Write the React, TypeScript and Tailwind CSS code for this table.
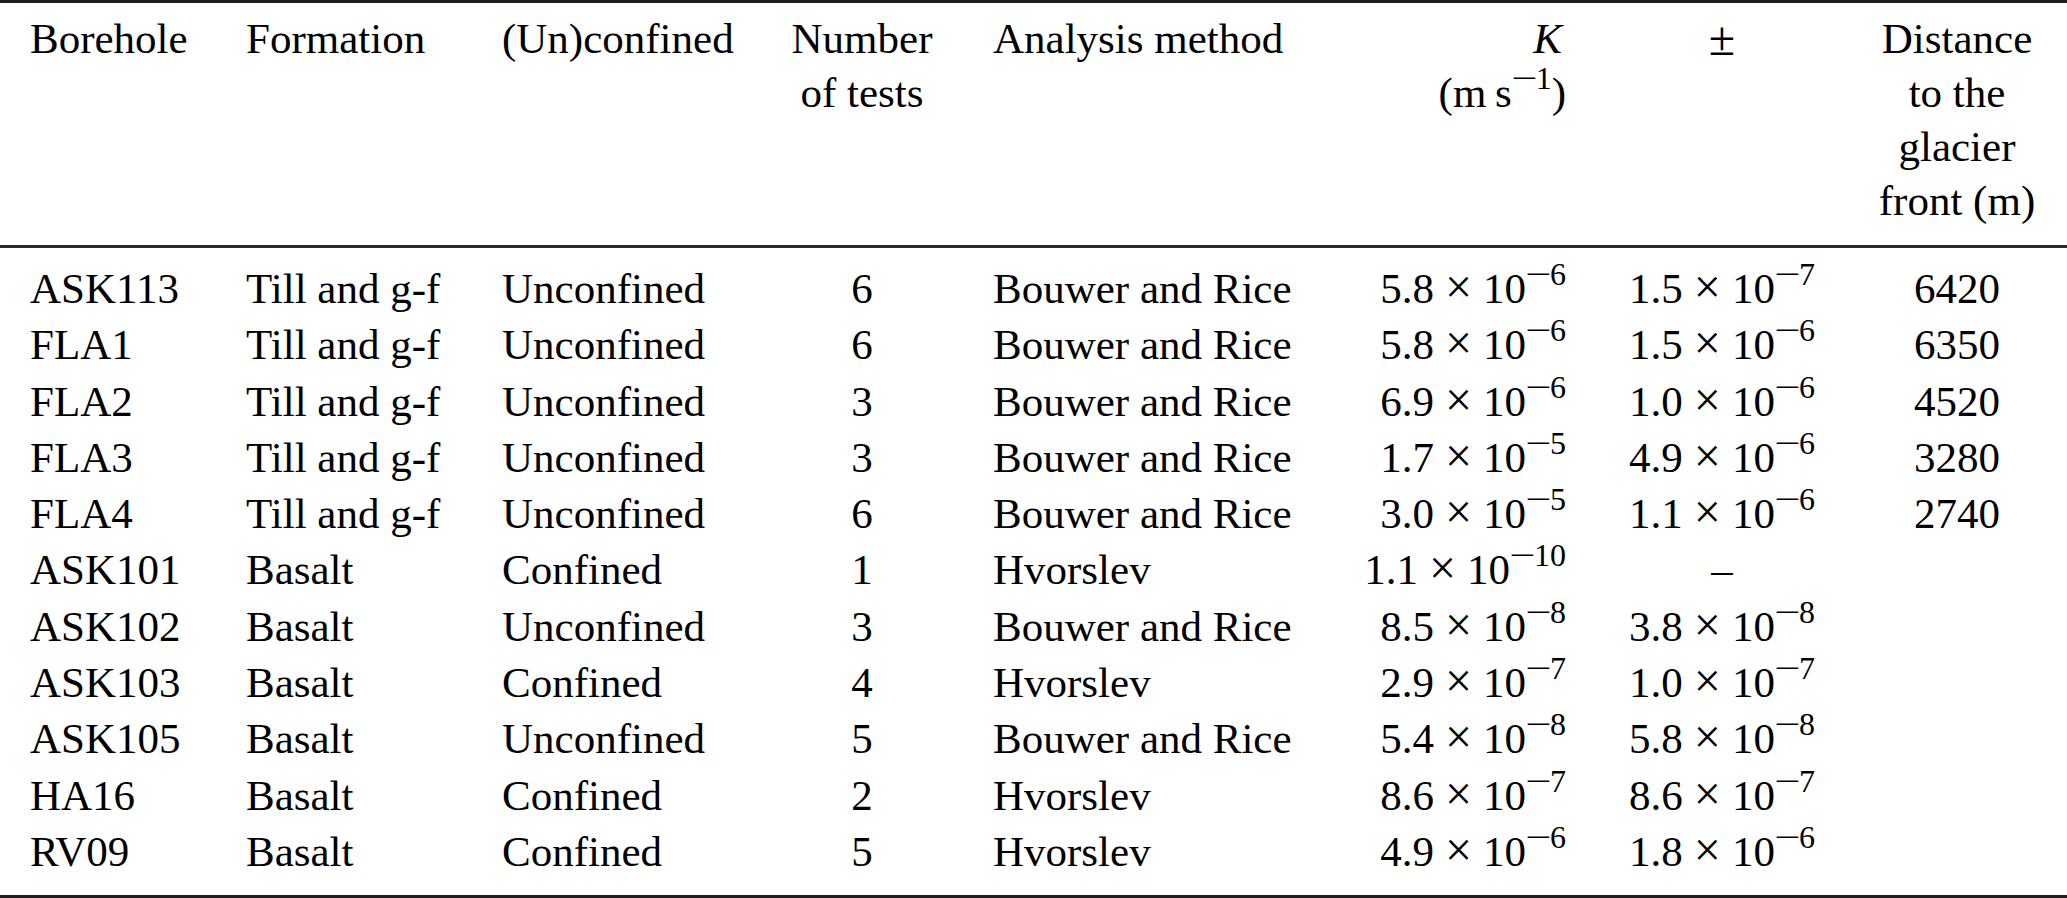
import React from 'react';

type Sci = { m: string; e: string } | null;

interface Row {
	borehole: string;
	formation: string;
	confined: string;
	tests: string;
	method: string;
	k: Sci;
	err: Sci;
	distance: string;
}

const ROWS: Row[] = [
	{ borehole: 'ASK113', formation: 'Till and g-f', confined: 'Unconfined', tests: '6', method: 'Bouwer and Rice', k: { m: '5.8', e: '6' }, err: { m: '1.5', e: '7' }, distance: '6420' },
	{ borehole: 'FLA1', formation: 'Till and g-f', confined: 'Unconfined', tests: '6', method: 'Bouwer and Rice', k: { m: '5.8', e: '6' }, err: { m: '1.5', e: '6' }, distance: '6350' },
	{ borehole: 'FLA2', formation: 'Till and g-f', confined: 'Unconfined', tests: '3', method: 'Bouwer and Rice', k: { m: '6.9', e: '6' }, err: { m: '1.0', e: '6' }, distance: '4520' },
	{ borehole: 'FLA3', formation: 'Till and g-f', confined: 'Unconfined', tests: '3', method: 'Bouwer and Rice', k: { m: '1.7', e: '5' }, err: { m: '4.9', e: '6' }, distance: '3280' },
	{ borehole: 'FLA4', formation: 'Till and g-f', confined: 'Unconfined', tests: '6', method: 'Bouwer and Rice', k: { m: '3.0', e: '5' }, err: { m: '1.1', e: '6' }, distance: '2740' },
	{ borehole: 'ASK101', formation: 'Basalt', confined: 'Confined', tests: '1', method: 'Hvorslev', k: { m: '1.1', e: '10' }, err: null, distance: '' },
	{ borehole: 'ASK102', formation: 'Basalt', confined: 'Unconfined', tests: '3', method: 'Bouwer and Rice', k: { m: '8.5', e: '8' }, err: { m: '3.8', e: '8' }, distance: '' },
	{ borehole: 'ASK103', formation: 'Basalt', confined: 'Confined', tests: '4', method: 'Hvorslev', k: { m: '2.9', e: '7' }, err: { m: '1.0', e: '7' }, distance: '' },
	{ borehole: 'ASK105', formation: 'Basalt', confined: 'Unconfined', tests: '5', method: 'Bouwer and Rice', k: { m: '5.4', e: '8' }, err: { m: '5.8', e: '8' }, distance: '' },
	{ borehole: 'HA16', formation: 'Basalt', confined: 'Confined', tests: '2', method: 'Hvorslev', k: { m: '8.6', e: '7' }, err: { m: '8.6', e: '7' }, distance: '' },
	{ borehole: 'RV09', formation: 'Basalt', confined: 'Confined', tests: '5', method: 'Hvorslev', k: { m: '4.9', e: '6' }, err: { m: '1.8', e: '6' }, distance: '' },
];

// superscript exponent with a wide TeX-like minus sign
const Exponent: React.FC<{ value: string }> = ({ value }) => (
	<sup className="text-[32px] -top-[18px]">
		<span className="inline-block w-[24px] text-center scale-x-[1.45]">−</span>
		{value}
	</sup>
);

const SciValue: React.FC<{ value: Sci }> = ({ value }) => {
	if (!value) return <span>–</span>;
	return (
		<span className="whitespace-nowrap">
			{value.m}
			<span className="mx-[11px] text-[48px] leading-none">×</span>
			10
			<Exponent value={value.e} />
		</span>
	);
};

export default function App() {
	return (
		<div className="w-[2067px] h-[898px] bg-white text-black font-['Liberation_Serif',serif] text-[43px]">
			{/* top rule */}
			<div className="h-[3px] bg-[#1e1e1e]" />

			{/* Header */}
			<div className="flex items-start pl-[30px] pt-[9px] leading-[54px] h-[242px]">
				<div className="w-[216px]">Borehole</div>
				<div className="w-[256px]">Formation</div>
				<div className="w-[278px]">(Un)confined</div>
				<div className="w-[164px] text-center">
					Number
					<br />
					of tests
				</div>
				<div className="w-[356px] pl-[49px] whitespace-nowrap">Analysis method</div>
				<div className="w-[266px] text-right whitespace-nowrap">
					<span className="italic pr-[4px]">K</span>
					<br />
					(m&thinsp;s
					<Exponent value="1" />)
				</div>
				<div className="w-[312px] text-center text-[48px]">±</div>
				<div className="w-[158px] text-center whitespace-nowrap">
					Distance
					<br />
					to the
					<br />
					glacier
					<br />
					front (m)
				</div>
			</div>

			{/* header rule */}
			<div className="h-[3px] bg-[#2a2a2a]" />

			{/* Body */}
			<div className="pl-[30px] pt-[13px] pb-[15px] leading-[56.3px]">
				{ROWS.map((row) => (
					<div key={row.borehole} className="flex items-start">
						<div className="w-[216px]">{row.borehole}</div>
						<div className="w-[256px] whitespace-nowrap">{row.formation}</div>
						<div className="w-[278px]">{row.confined}</div>
						<div className="w-[164px] text-center">{row.tests}</div>
						<div className="w-[356px] pl-[49px] whitespace-nowrap">{row.method}</div>
						<div className="w-[266px] text-right">
							<SciValue value={row.k} />
						</div>
						<div className="w-[312px] text-center">
							<SciValue value={row.err} />
						</div>
						<div className="w-[158px] text-center">{row.distance}</div>
					</div>
				))}
			</div>

			{/* bottom rule */}
			<div className="h-[3px] bg-[#1e1e1e]" />
		</div>
	);
}
